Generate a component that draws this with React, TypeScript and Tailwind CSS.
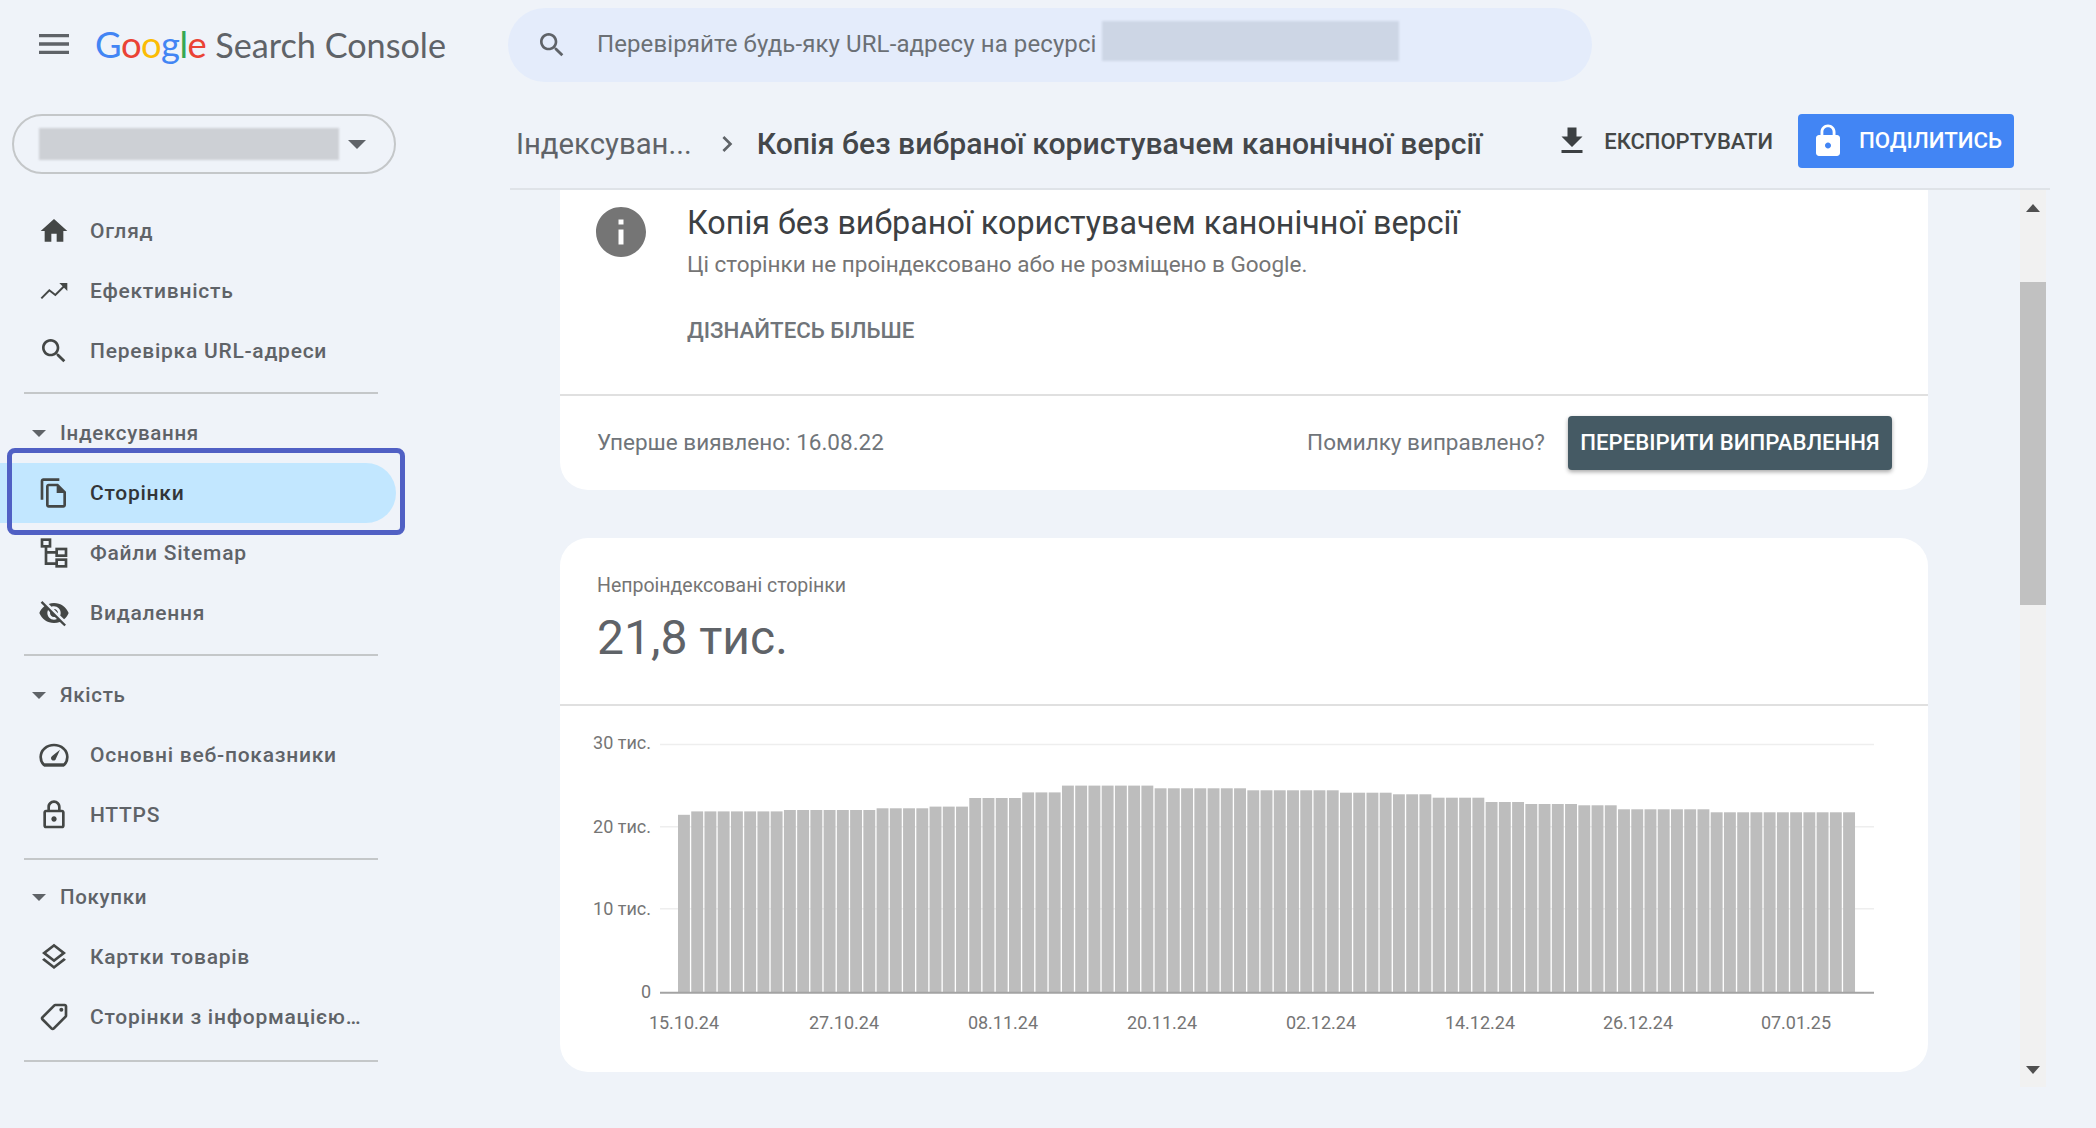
import React from 'react';

const Icon: React.FC<{ d: string; className?: string }> = ({ d, className }) => (
  <svg viewBox="0 0 24 24" fill="currentColor" className={className}>
    <path d={d} />
  </svg>
);

const paths = {
  menu: 'M3 18h18v-2H3v2zm0-5h18v-2H3v2zm0-7v2h18V6H3z',
  search:
    'M15.5 14h-.79l-.28-.27C15.41 12.59 16 11.11 16 9.5 16 5.91 13.09 3 9.5 3S3 5.91 3 9.5 5.91 16 9.5 16c1.61 0 3.09-.59 4.23-1.57l.27.28v.79l5 4.99L20.49 19l-4.99-5zm-6 0C7.01 14 5 11.99 5 9.5S7.01 5 9.5 5 14 7.01 14 9.5 11.99 14 9.5 14z',
  home: 'M10 20v-6h4v6h5v-8h3L12 3 2 12h3v8z',
  pages:
    'M16 1H4c-1.1 0-2 .9-2 2v14h2V3h12V1zm-1 4H8c-1.1 0-1.99.9-1.99 2L6 21c0 1.1.89 2 1.99 2H19c1.1 0 2-.9 2-2V11l-6-6zM8 21V7h6v5h5v9H8z',
  eyeOff:
    'M12 7c2.76 0 5 2.24 5 5 0 .65-.13 1.26-.36 1.83l2.92 2.92c1.51-1.26 2.7-2.89 3.43-4.75-1.73-4.39-6-7.5-11-7.5-1.4 0-2.74.25-3.98.7l2.16 2.16C10.74 7.13 11.35 7 12 7zM2 4.27l2.28 2.28.46.46C3.08 8.3 1.78 10.02 1 12c1.73 4.39 6 7.5 11 7.5 1.55 0 3.03-.3 4.38-.84l.42.42L19.73 22 21 20.73 3.27 3 2 4.27zM7.53 9.8l1.55 1.55c-.05.21-.08.43-.08.65 0 1.66 1.34 3 3 3 .22 0 .44-.03.65-.08l1.55 1.55c-.67.33-1.41.53-2.2.53-2.76 0-5-2.24-5-5 0-.79.2-1.53.53-2.2zm4.31-.78l3.15 3.15.02-.16c0-1.66-1.34-3-3-3l-.17.01z',
  lockOutline:
    'M18 8h-1V6c0-2.76-2.24-5-5-5S7 3.24 7 6v2H6c-1.1 0-2 .9-2 2v10c0 1.1.9 2 2 2h12c1.1 0 2-.9 2-2V10c0-1.1-.9-2-2-2zM9 6c0-1.66 1.34-3 3-3s3 1.34 3 3v2H9V6zm9 14H6V10h12v10zm-6-3c1.1 0 2-.9 2-2s-.9-2-2-2-2 .9-2 2 .9 2 2 2z',
  lock:
    'M18 8h-1V6c0-2.76-2.24-5-5-5S7 3.24 7 6v2H6c-1.1 0-2 .9-2 2v10c0 1.1.9 2 2 2h12c1.1 0 2-.9 2-2V10c0-1.1-.9-2-2-2zm-6 9c-1.1 0-2-.9-2-2s.9-2 2-2 2 .9 2 2-.9 2-2 2zm3.1-9H8.9V6c0-1.71 1.39-3.1 3.1-3.1 1.71 0 3.1 1.39 3.1 3.1v2z',
  layers:
    'M11.99 18.54l-7.37-5.73L3 14.07l9 7 9-7-1.63-1.27-7.38 5.74zM12 16l7.36-5.73L21 9l-9-7-9 7 1.63 1.27L12 16zm0-11.47L17.74 9 12 13.47 6.26 9 12 4.53z',
  download: 'M19 9h-4V3H9v6H5l7 7 7-7zM5 18v2h14v-2H5z',
  info: 'M12 2C6.48 2 2 6.48 2 12s4.48 10 10 10 10-4.48 10-10S17.52 2 12 2zm1 15h-2v-6h2v6zm0-8h-2V7h2v2z',
  chevron: 'M10 6L8.59 7.41 13.17 12l-4.58 4.59L10 18l6-6z',
};

const TrendIcon = () => (
  <svg viewBox="0 0 24 24" fill="none" stroke="currentColor" strokeWidth="1.5" className="w-[32px] h-[32px]">
    <path d="M2.5 17.5l6-6 4.5 3.5 7.5-7.5" />
    <path fill="currentColor" stroke="none" d="M16 6h6v6z" />
  </svg>
);

const SitemapIcon = () => (
  <svg viewBox="0 0 24 24" fill="none" stroke="currentColor" strokeWidth="2" className="w-[32px] h-[32px]">
    <rect x="3" y="2" width="6" height="5" />
    <rect x="14" y="9" width="7" height="5" />
    <rect x="14" y="17" width="7" height="5" />
    <path d="M6 7v13h8M6 11.5h8" />
  </svg>
);

const GaugeIcon = () => (
  <svg viewBox="0 0 24 24" fill="none" stroke="currentColor" className="w-[32px] h-[32px]">
    <path strokeWidth="2" d="M4.5 19.5C2.9 18 2 16 2 13.5 2 8.3 6.5 4.5 12 4.5s10 3.8 10 9c0 2.5-.9 4.5-2.5 6z" />
    <path strokeWidth="2.4" d="M4.5 19.5h15" />
    <path fill="currentColor" stroke="none" d="M16.5 8l-3 6.6a1.9 1.9 0 1 1-2.9-1.9z" />
  </svg>
);

const TagIcon = () => (
  <svg viewBox="0 0 24 24" fill="currentColor" className="w-[32px] h-[32px]">
    <g transform="translate(24 0) scale(-1 1)">
      <path d="M21.41 11.58l-9-9C12.05 2.22 11.55 2 11 2H4c-1.1 0-2 .9-2 2v7c0 .55.22 1.05.59 1.42l9 9c.36.36.86.58 1.41.58s1.05-.22 1.41-.59l7-7c.37-.36.59-.86.59-1.41s-.23-1.06-.59-1.42zM13 20.01L4 11V4h7v-.01l9 9-7 7.02z" />
      <circle cx="6.5" cy="6.5" r="1.5" />
    </g>
  </svg>
);

const NavRow: React.FC<{ icon: React.ReactNode; label: string; active?: boolean }> = ({ icon, label, active }) => (
  <div
    className={`relative h-[60px] w-[396px] flex items-center pl-[38px] rounded-r-full ${
      active ? 'bg-[#c2e7ff] text-[#333538]' : 'text-[#5f6368]'
    }`}
  >
    <span className="w-[32px] h-[32px] flex items-center justify-center text-[#444746]">{icon}</span>
    <span className="ml-[20px] mt-[1px] text-[21px] tracking-[0.75px] font-medium whitespace-nowrap">{label}</span>
    {active && (
      <div className="absolute left-[7px] top-[-15px] w-[398px] h-[87px] border-[5px] border-[#5060c4] rounded-[8px]" />
    )}
  </div>
);

const NavHeading: React.FC<{ label: string }> = ({ label }) => (
  <div className="h-[60px] flex items-center pl-[32px] text-[#5f6368]">
    <span className="w-0 h-0 border-x-[7px] border-x-transparent border-t-[7px] border-t-[#5f6368]" />
    <span className="ml-[14px] text-[20.5px] tracking-[0.7px] font-medium">{label}</span>
  </div>
);

const Divider: React.FC<{ className?: string }> = ({ className }) => (
  <div className={`ml-[24px] w-[354px] h-[2px] bg-[#c4c7c9] ${className || ''}`} />
);

const tops: [number, number][] = [
  [1, 814.8],
  [7, 811.4],
  [7, 810],
  [4, 808.3],
  [3, 806.6],
  [4, 798],
  [3, 792.4],
  [7, 785.6],
  [7, 788.3],
  [7, 790.3],
  [4, 792.7],
  [3, 794.3],
  [4, 797.7],
  [3, 802],
  [4, 804],
  [3, 805.3],
  [7, 809.3],
  [11, 812.3],
];
const barTops = tops.flatMap(([n, t]) => Array.from({ length: n }, () => t));

const xLabels = [
  ['15.10.24', 684],
  ['27.10.24', 844],
  ['08.11.24', 1003],
  ['20.11.24', 1162],
  ['02.12.24', 1321],
  ['14.12.24', 1480],
  ['26.12.24', 1638],
  ['07.01.25', 1796],
] as const;

const yLabels = [
  [744.5, 749, '30 тис.'],
  [826.7, 833, '20 тис.'],
  [908.7, 915, '10 тис.'],
] as const;

const Chart = () => (
  <svg width="1368" height="366" viewBox="560 706 1368 366" className="block">
    {yLabels.map(([y, ty, t]) => (
      <g key={t}>
        <line x1="660" x2="1874" y1={y} y2={y} stroke="#eeeeee" strokeWidth="1.5" />
        <text x="651" y={ty} textAnchor="end" fontSize="18" fill="#757575" fontFamily="Roboto, sans-serif">
          {t}
        </text>
      </g>
    ))}
    {barTops.map((t, i) => (
      <rect key={i} x={678 + i * 13.24} y={t} width={11.9} height={992 - t} fill="#bdbdbd" />
    ))}
    <line x1="660" x2="1874" y1="992.7" y2="992.7" stroke="#a3a3a3" strokeWidth="2" />
    <text x="651" y="998" textAnchor="end" fontSize="18" fill="#757575" fontFamily="Roboto, sans-serif">
      0
    </text>
    {xLabels.map(([t, x]) => (
      <text key={t} x={x} y="1029" textAnchor="middle" fontSize="18" fill="#757575" fontFamily="Roboto, sans-serif">
        {t}
      </text>
    ))}
  </svg>
);

export default function App() {
  return (
    <div className="w-[2096px] h-[1128px] overflow-hidden bg-[#eff3f9] font-['Roboto',sans-serif] text-[#444746]">
      {/* Top bar */}
      <div className="h-[90px] flex">
        <div className="w-[508px] flex items-start pt-[24px]">
          <Icon d={paths.menu} className="ml-[34px] w-[40px] h-[40px] text-[#5f6368]" />
          <div className="ml-[21px] flex items-baseline whitespace-nowrap text-[36.4px] leading-[40px]">
            <span className="font-['Lato',sans-serif] tracking-[-0.5px]">
              <span className="text-[#4285f4]">G</span>
              <span className="text-[#ea4335]">o</span>
              <span className="text-[#fbbc05]">o</span>
              <span className="text-[#4285f4]">g</span>
              <span className="text-[#34a853]">l</span>
              <span className="text-[#ea4335]">e</span>
            </span>
            <span className="ml-[9px] font-['Lato',sans-serif] text-[#5f6368] text-[34.2px]">Search Console</span>
          </div>
        </div>
        <div className="mt-[8px] h-[74px] w-[1084px] rounded-full bg-[#e4ecfb] flex items-center pl-[28px]">
          <Icon d={paths.search} className="w-[32px] h-[32px] text-[#5f6368]" />
          <span className="ml-[29px] mb-[2px] text-[24px] text-[#6b7075] whitespace-nowrap tracking-[0.1px]">
            Перевіряйте будь-яку URL-адресу на ресурсі
          </span>
          <div className="ml-[5px] mb-[8px] w-[297px] h-[40px] bg-[#cdd6e5] blur-[1px]" />
        </div>
      </div>

      <div className="flex">
        {/* Sidebar */}
        <div className="w-[510px] shrink-0">
          <div className="ml-[12px] mt-[24px] w-[384px] h-[60px] rounded-full border-2 border-[#c4c7c9] flex items-center pl-[25px]">
            <div className="w-[300px] h-[32px] bg-[#cdd0d5] blur-[1px]" />
            <span className="ml-[9px] w-0 h-0 border-x-[9px] border-x-transparent border-t-[9px] border-t-[#5f6368]" />
          </div>
          <div className="mt-[27px]">
            <NavRow icon={<Icon d={paths.home} className="w-[32px] h-[32px]" />} label="Огляд" />
            <NavRow icon={<TrendIcon />} label="Ефективність" />
            <NavRow icon={<Icon d={paths.search} className="w-[32px] h-[32px]" />} label="Перевірка URL-адреси" />
          </div>
          <Divider className="mt-[11px]" />
          <div className="pt-[9px]">
            <NavHeading label="Індексування" />
            <NavRow icon={<Icon d={paths.pages} className="w-[32px] h-[32px]" />} label="Сторінки" active />
            <NavRow icon={<SitemapIcon />} label="Файли Sitemap" />
            <NavRow icon={<Icon d={paths.eyeOff} className="w-[32px] h-[32px]" />} label="Видалення" />
          </div>
          <Divider className="mt-[11px]" />
          <div className="pt-[9px]">
            <NavHeading label="Якість" />
            <NavRow icon={<GaugeIcon />} label="Основні веб-показники" />
            <NavRow icon={<Icon d={paths.lockOutline} className="w-[32px] h-[32px]" />} label="HTTPS" />
          </div>
          <Divider className="mt-[13px]" />
          <div className="pt-[7px]">
            <NavHeading label="Покупки" />
            <NavRow icon={<Icon d={paths.layers} className="w-[32px] h-[32px]" />} label="Картки товарів" />
            <NavRow icon={<TagIcon />} label="Сторінки з інформацією…" />
          </div>
          <Divider className="mt-[13px]" />
        </div>

        {/* Main */}
        <div className="w-[1540px] shrink-0">
          <div className="h-[100px] flex items-start border-b-2 border-[#dfe3e8]">
            <div className="ml-[6px] mt-[34px] flex items-center h-[40px] whitespace-nowrap">
              <span className="mt-[1px] text-[29.3px] text-[#5f6368]">Індексуван...</span>
              <Icon d={paths.chevron} className="ml-[19px] w-[32px] h-[32px] text-[#5f6368]" />
              <span className="ml-[14px] text-[30.2px] font-medium text-[#44474a]">
                Копія без вибраної користувачем канонічної версії
              </span>
            </div>
            <div className="ml-auto mr-[36px] mt-[24px] flex items-center">
              <Icon d={paths.download} className="w-[36px] h-[36px] text-[#3c4043]" />
              <span className="ml-[14px] text-[22px] font-medium text-[#444746] whitespace-nowrap">ЕКСПОРТУВАТИ</span>
              <div className="ml-[25px] w-[216px] h-[54px] rounded-[4px] bg-[#4285f4] flex items-center pl-[12px] text-white">
                <Icon d={paths.lock} className="w-[36px] h-[36px]" />
                <span className="ml-[13px] text-[22.3px] font-medium whitespace-nowrap">ПОДІЛИТИСЬ</span>
              </div>
            </div>
          </div>

          <div className="flex">
            <div className="w-[1510px] shrink-0 pl-[50px]">
              {/* Status card */}
              <div className="w-[1368px] h-[300px] bg-white rounded-b-[28px]">
                <div className="h-[206px] border-b-2 border-[#e0e0e0] flex items-start pl-[31px]">
                  <Icon d={paths.info} className="mt-[12px] w-[60px] h-[60px] text-[#757575]" />
                  <div className="ml-[36px] pt-[13px]">
                    <div className="h-[40px] leading-[40px] text-[32.3px] text-[#3c4043] whitespace-nowrap">
                      Копія без вибраної користувачем канонічної версії
                    </div>
                    <div className="mt-[6px] h-[30px] leading-[30px] text-[22.5px] text-[#757575] whitespace-nowrap">
                      Ці сторінки не проіндексовано або не розміщено в Google.
                    </div>
                    <div className="mt-[36px] h-[30px] leading-[30px] text-[22.3px] font-medium text-[#70757a] whitespace-nowrap">
                      ДІЗНАЙТЕСЬ БІЛЬШЕ
                    </div>
                  </div>
                </div>
                <div className="h-[94px] flex items-center pl-[37px] pr-[36px] text-[22.5px] text-[#70757a]">
                  <span>Уперше виявлено: 16.08.22</span>
                  <span className="ml-auto">Помилку виправлено?</span>
                  <button className="ml-[23px] w-[324px] h-[54px] rounded-[4px] bg-[#455a64] text-white text-[22.2px] font-medium shadow-[0_2px_4px_rgba(0,0,0,0.35)] whitespace-nowrap">
                    ПЕРЕВІРИТИ ВИПРАВЛЕННЯ
                  </button>
                </div>
              </div>

              {/* Chart card */}
              <div className="mt-[48px] w-[1368px] h-[534px] bg-white rounded-[28px]">
                <div className="h-[168px] border-b-2 border-[#e0e0e0] pl-[37px] pt-[36px]">
                  <div className="h-[24px] leading-[24px] text-[19.5px] text-[#757575] whitespace-nowrap">
                    Непроіндексовані сторінки
                  </div>
                  <div className="mt-[12px] h-[56px] leading-[56px] text-[48px] text-[#5f6368]">21,8 тис.</div>
                </div>
                <Chart />
              </div>
            </div>

            {/* Scrollbar */}
            <div className="w-[26px] h-[897px] bg-[#f1f1f1] flex flex-col items-center pt-[14px]">
              <span className="w-0 h-0 border-x-[7px] border-x-transparent border-b-[8px] border-b-[#505050]" />
              <div className="mt-[70px] w-[26px] h-[323px] bg-[#c1c1c1]" />
              <span className="mt-auto mb-[13px] w-0 h-0 border-x-[7px] border-x-transparent border-t-[8px] border-t-[#505050]" />
            </div>
          </div>
        </div>
      </div>
    </div>
  );
}
